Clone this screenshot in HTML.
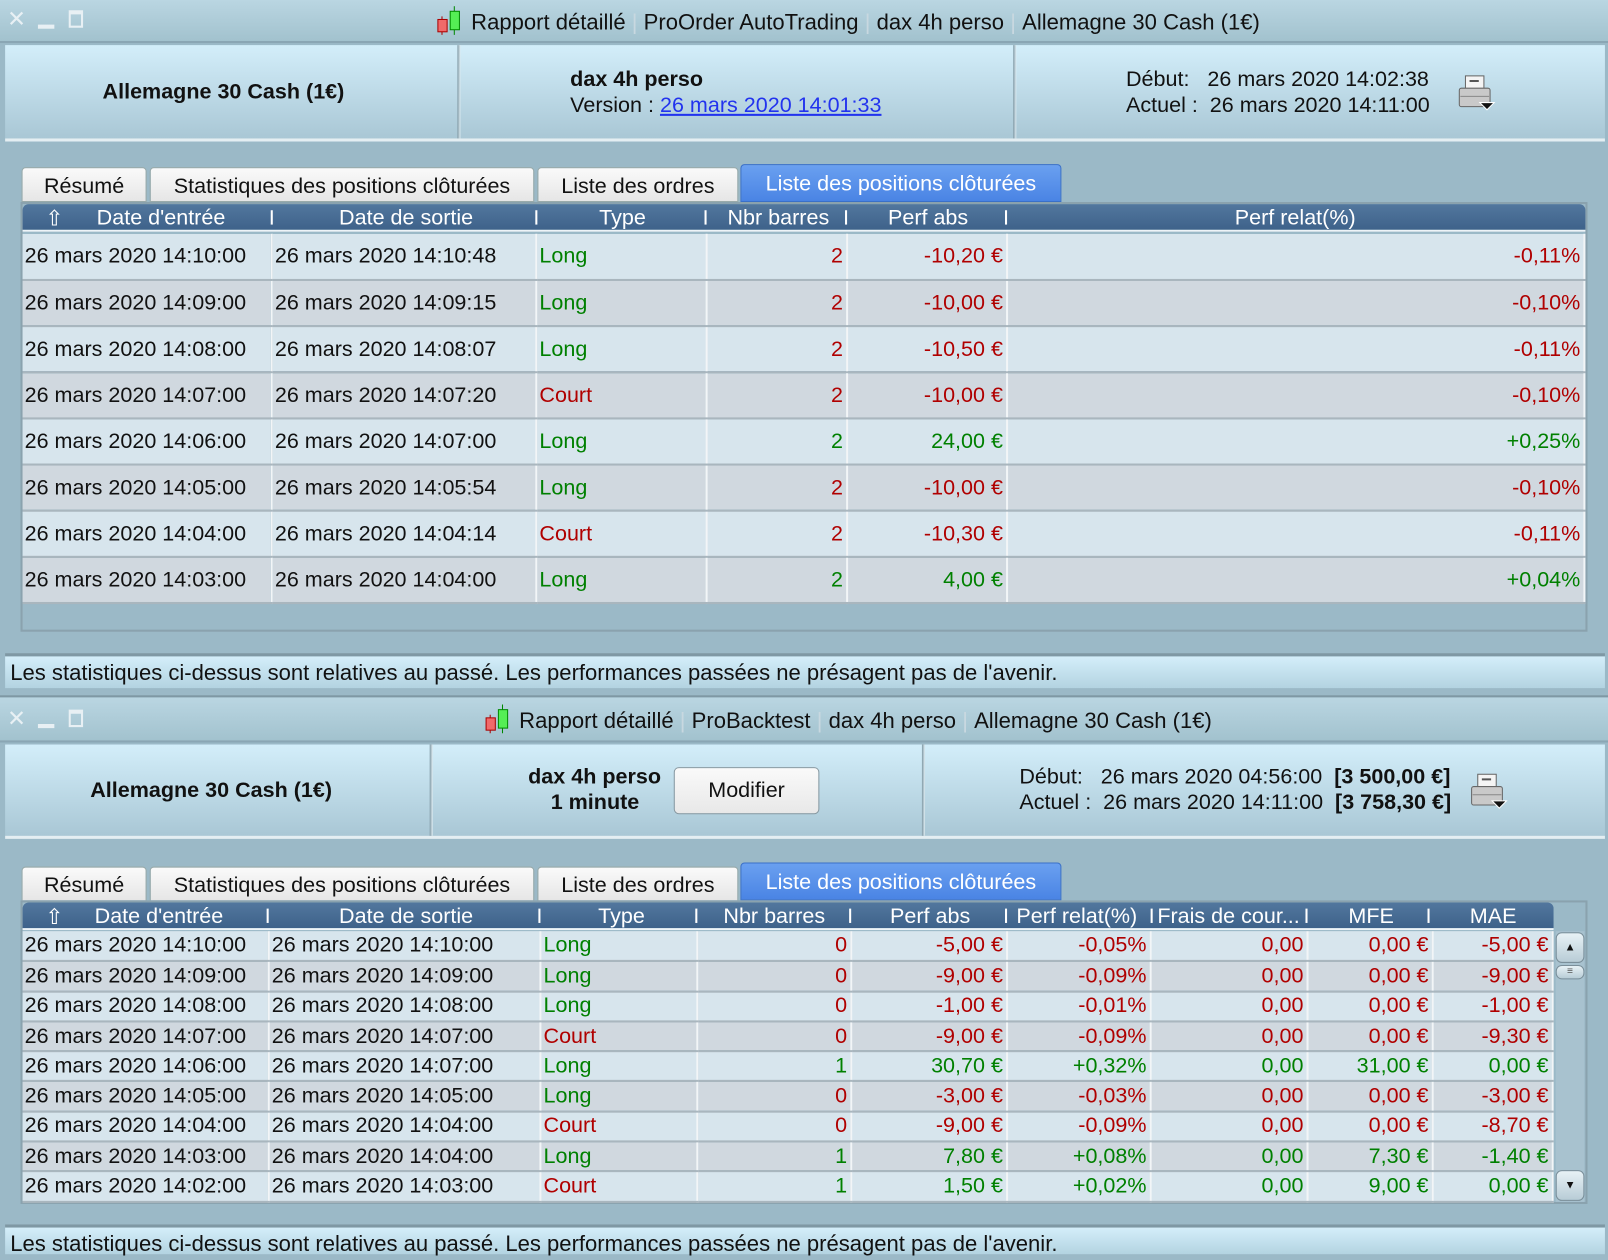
<!DOCTYPE html>
<html><head><meta charset="utf-8">
<style>
*{margin:0;padding:0;box-sizing:border-box}
html,body{width:1608px;height:1254px;overflow:hidden;background:#9bb9c7}
#w{position:absolute;left:0;top:0;width:1568px;height:1223px;transform:scale(1.02551);transform-origin:0 0;font-family:"Liberation Sans",sans-serif;font-size:21px;color:#111;background:#9bb9c7}
.abs{position:absolute}
.tb{position:absolute;left:0;width:1568px;background:linear-gradient(#bad6e2,#a2c2ce);border-bottom:2px solid #8aa6b4}
.ttl{position:absolute;left:0;width:100%;padding-left:86px;text-align:center;white-space:nowrap;font-size:21.5px}
.ttl .sep{color:#c8d8e0;margin:0 6px}
.info{position:absolute;left:5px;width:1560px;background:linear-gradient(#d3eefa,#a9c7d5);border-bottom:3px solid #e4eef2}
.vs{position:absolute;top:0;bottom:0;width:3px;background:linear-gradient(90deg,#7f98a4,#dfeef4)}
.tab{position:absolute;height:34px;background:linear-gradient(#fafafa,#e6e6e6);border:1px solid #9aa;border-radius:4px 4px 0 0;text-align:center;line-height:35px}
.tab.sel{background:linear-gradient(#6aa0f0,#4a84e4);color:#fff;border-color:#3a70c8;height:37px;line-height:38px}
.frame{position:absolute;border:2px solid #8aa2ae;background:#9bb9c7}
.hdr{position:absolute;height:27px;background:linear-gradient(#52779e,#3e628a);border-radius:6px 6px 0 0;color:#fff;border-bottom:2px solid #eef4f8}
.hdr span{position:absolute;top:2px;transform:translateX(-50%);white-space:nowrap}
.hdr i{position:absolute;top:6px;width:2px;height:14px;background:#fff}
table{position:absolute;border-collapse:collapse;table-layout:fixed}
td{white-space:nowrap;overflow:hidden;border-right:2px solid #f2f5f7;border-bottom:2px solid #a9b6be;padding:0 3px;text-align:right}
tr:nth-child(odd) td{background:#d7e5ed}
tr:nth-child(even) td{background:#d0d8df}
td.l{text-align:left;padding-left:2px}
.r{color:#b00000}.g{color:#008000}
.foot{position:absolute;left:5px;width:1560px;background:linear-gradient(#d4eefa,#b3d3e1);border-top:3px solid #7f98a4;padding-left:5px;font-size:21.5px}
.ctrl{position:absolute;color:#e8f0f4;font-size:22px}
</style></head><body><div id="w">

<!-- TOP WINDOW -->
<div class="tb" style="top:0;height:42px">
  <div class="ctrl" style="left:7px;top:6px">✕</div>
  <div class="abs" style="left:37px;top:24px;width:16px;height:4px;background:#e8f0f4"></div>
  <div class="abs" style="left:67px;top:10px;width:14px;height:17px;border:2px solid #e8f0f4;border-top-width:4px"></div>
  <div class="ttl" style="top:6px">
    <svg width="34" height="30" style="vertical-align:-7px" viewBox="0 0 34 30"><line x1="6" y1="10" x2="6" y2="28" stroke="#a00"/><rect x="2" y="13" width="9" height="12" fill="#f06a6a" stroke="#a00"/><line x1="18" y1="0" x2="18" y2="28" stroke="#080"/><rect x="14" y="5" width="9" height="18" fill="#5e5" stroke="#080"/></svg>Rapport détaillé<span class="sep">|</span>ProOrder AutoTrading<span class="sep">|</span>dax 4h perso<span class="sep">|</span>Allemagne 30 Cash (1€)
  </div>
</div>
<div class="info" style="top:44px;height:94px">
  <div class="abs" style="left:95px;top:34px;font-weight:bold">Allemagne 30 Cash (1€)</div>
  <div class="vs" style="left:441px"></div>
  <div class="abs" style="left:551px;top:22px;font-weight:bold">dax 4h perso</div>
  <div class="abs" style="left:551px;top:47px">Version : <span style="color:#2233ee;text-decoration:underline">26 mars 2020 14:01:33</span></div>
  <div class="vs" style="left:983px"></div>
  <div class="abs" style="left:1093px;top:22px">Début:&nbsp;&nbsp; 26 mars 2020 14:02:38</div>
  <div class="abs" style="left:1093px;top:47px">Actuel :&nbsp; 26 mars 2020 14:11:00</div>
  <svg class="abs" style="left:1415px;top:28px" width="40" height="38" viewBox="0 0 40 38"><rect x="9" y="2" width="18" height="14" fill="#f4f4f4" stroke="#666"/><line x1="13" y1="7" x2="22" y2="7" stroke="#555" stroke-width="2"/><rect x="3" y="14" width="30" height="18" rx="2" fill="#c9c9c9" stroke="#666"/><line x1="4" y1="22" x2="32" y2="22" stroke="#888"/><path d="M23 28h14l-7 7z" fill="#111" stroke="#fff"/></svg>
</div>

<div class="tab" style="left:21px;top:163px;width:122px">Résumé</div>
<div class="tab" style="left:146px;top:163px;width:375px">Statistiques des positions clôturées</div>
<div class="tab" style="left:524px;top:163px;width:196px">Liste des ordres</div>
<div class="tab sel" style="left:722px;top:160px;width:313px">Liste des positions clôturées</div>

<div class="frame" style="left:20px;top:197px;width:1528px;height:419px"></div>
<div class="hdr" style="left:22px;top:199px;width:1524px">
  <span style="left:31px">⇧</span><span style="left:135px">Date d'entrée</span><i style="left:242px"></i>
  <span style="left:374px">Date de sortie</span><i style="left:500px"></i>
  <span style="left:585px">Type</span><i style="left:665px"></i>
  <span style="left:737px">Nbr barres</span><i style="left:802px"></i>
  <span style="left:883px">Perf abs</span><i style="left:958px"></i>
  <span style="left:1241px">Perf relat(%)</span>
</div>
<table style="left:22px;top:228px;width:1524px">
<colgroup><col style="width:243px"><col style="width:258px"><col style="width:166px"><col style="width:137px"><col style="width:156px"><col></colgroup>
<tr style="height:45px"><td class="l">26 mars 2020 14:10:00</td><td class="l">26 mars 2020 14:10:48</td><td class="l g">Long</td><td class="r">2</td><td class="r">-10,20 €</td><td class="r">-0,11%</td></tr>
<tr style="height:45px"><td class="l">26 mars 2020 14:09:00</td><td class="l">26 mars 2020 14:09:15</td><td class="l g">Long</td><td class="r">2</td><td class="r">-10,00 €</td><td class="r">-0,10%</td></tr>
<tr style="height:45px"><td class="l">26 mars 2020 14:08:00</td><td class="l">26 mars 2020 14:08:07</td><td class="l g">Long</td><td class="r">2</td><td class="r">-10,50 €</td><td class="r">-0,11%</td></tr>
<tr style="height:45px"><td class="l">26 mars 2020 14:07:00</td><td class="l">26 mars 2020 14:07:20</td><td class="l r">Court</td><td class="r">2</td><td class="r">-10,00 €</td><td class="r">-0,10%</td></tr>
<tr style="height:45px"><td class="l">26 mars 2020 14:06:00</td><td class="l">26 mars 2020 14:07:00</td><td class="l g">Long</td><td class="g">2</td><td class="g">24,00 €</td><td class="g">+0,25%</td></tr>
<tr style="height:45px"><td class="l">26 mars 2020 14:05:00</td><td class="l">26 mars 2020 14:05:54</td><td class="l g">Long</td><td class="r">2</td><td class="r">-10,00 €</td><td class="r">-0,10%</td></tr>
<tr style="height:45px"><td class="l">26 mars 2020 14:04:00</td><td class="l">26 mars 2020 14:04:14</td><td class="l r">Court</td><td class="r">2</td><td class="r">-10,30 €</td><td class="r">-0,11%</td></tr>
<tr style="height:45px"><td class="l">26 mars 2020 14:03:00</td><td class="l">26 mars 2020 14:04:00</td><td class="l g">Long</td><td class="g">2</td><td class="g">4,00 €</td><td class="g">+0,04%</td></tr>
</table>

<div class="foot" style="top:637px;height:34px;line-height:32px">Les statistiques ci-dessus sont relatives au passé. Les performances passées ne présagent pas de l'avenir.</div>

<!-- BOTTOM WINDOW -->
<div class="tb" style="top:678px;height:46px;border-top:2px solid #7f98a4">
  <div class="ctrl" style="left:7px;top:8px">✕</div>
  <div class="abs" style="left:37px;top:26px;width:16px;height:4px;background:#e8f0f4"></div>
  <div class="abs" style="left:67px;top:12px;width:14px;height:17px;border:2px solid #e8f0f4;border-top-width:4px"></div>
  <div class="ttl" style="top:7px">
    <svg width="34" height="30" style="vertical-align:-7px" viewBox="0 0 34 30"><line x1="6" y1="10" x2="6" y2="28" stroke="#a00"/><rect x="2" y="13" width="9" height="12" fill="#f06a6a" stroke="#a00"/><line x1="18" y1="0" x2="18" y2="28" stroke="#080"/><rect x="14" y="5" width="9" height="18" fill="#5e5" stroke="#080"/></svg>Rapport détaillé<span class="sep">|</span>ProBacktest<span class="sep">|</span>dax 4h perso<span class="sep">|</span>Allemagne 30 Cash (1€)
  </div>
</div>
<div class="info" style="top:726px;height:92px">
  <div class="abs" style="left:83px;top:33px;font-weight:bold">Allemagne 30 Cash (1€)</div>
  <div class="vs" style="left:414px"></div>
  <div class="abs" style="left:510px;top:20px;font-weight:bold">dax 4h perso</div>
  <div class="abs" style="left:532px;top:45px;font-weight:bold">1 minute</div>
  <div class="abs" style="left:652px;top:22px;width:142px;height:46px;border:1px solid #8a9aa2;border-radius:5px;background:linear-gradient(#fafafa,#e8e8e8);text-align:center;line-height:44px">Modifier</div>
  <div class="vs" style="left:894px"></div>
  <div class="abs" style="left:989px;top:20px">Début:&nbsp;&nbsp; 26 mars 2020 04:56:00 &nbsp;<b>[3 500,00 €]</b></div>
  <div class="abs" style="left:989px;top:45px">Actuel :&nbsp; 26 mars 2020 14:11:00 &nbsp;<b>[3 758,30 €]</b></div>
  <svg class="abs" style="left:1427px;top:27px" width="40" height="38" viewBox="0 0 40 38"><rect x="9" y="2" width="18" height="14" fill="#f4f4f4" stroke="#666"/><line x1="13" y1="7" x2="22" y2="7" stroke="#555" stroke-width="2"/><rect x="3" y="14" width="30" height="18" rx="2" fill="#c9c9c9" stroke="#666"/><line x1="4" y1="22" x2="32" y2="22" stroke="#888"/><path d="M23 28h14l-7 7z" fill="#111" stroke="#fff"/></svg>
</div>

<div class="tab" style="left:21px;top:845px;width:122px">Résumé</div>
<div class="tab" style="left:146px;top:845px;width:375px">Statistiques des positions clôturées</div>
<div class="tab" style="left:524px;top:845px;width:196px">Liste des ordres</div>
<div class="tab sel" style="left:722px;top:841px;width:313px">Liste des positions clôturées</div>

<div class="frame" style="left:20px;top:878px;width:1528px;height:296px"></div>
<div class="hdr" style="left:22px;top:880px;width:1493px">
  <span style="left:31px">⇧</span><span style="left:133px">Date d'entrée</span><i style="left:238px"></i>
  <span style="left:374px">Date de sortie</span><i style="left:503px"></i>
  <span style="left:584px">Type</span><i style="left:656px"></i>
  <span style="left:733px">Nbr barres</span><i style="left:806px"></i>
  <span style="left:885px">Perf abs</span><i style="left:958px"></i>
  <span style="left:1028px">Perf relat(%)</span><i style="left:1100px"></i>
  <span style="left:1176px">Frais de cour...</span><i style="left:1251px"></i>
  <span style="left:1315px">MFE</span><i style="left:1370px"></i>
  <span style="left:1434px">MAE</span>
</div>
<table style="left:22px;top:908px;width:1493px;line-height:26px">
<colgroup><col style="width:240px"><col style="width:265px"><col style="width:153px"><col style="width:150px"><col style="width:152px"><col style="width:140px"><col style="width:153px"><col style="width:122px"><col></colgroup>
<tr style="height:29.3px"><td class="l">26 mars 2020 14:10:00</td><td class="l">26 mars 2020 14:10:00</td><td class="l g">Long</td><td class="r">0</td><td class="r">-5,00 €</td><td class="r">-0,05%</td><td class="r">0,00</td><td class="r">0,00 €</td><td class="r">-5,00 €</td></tr>
<tr style="height:29.3px"><td class="l">26 mars 2020 14:09:00</td><td class="l">26 mars 2020 14:09:00</td><td class="l g">Long</td><td class="r">0</td><td class="r">-9,00 €</td><td class="r">-0,09%</td><td class="r">0,00</td><td class="r">0,00 €</td><td class="r">-9,00 €</td></tr>
<tr style="height:29.3px"><td class="l">26 mars 2020 14:08:00</td><td class="l">26 mars 2020 14:08:00</td><td class="l g">Long</td><td class="r">0</td><td class="r">-1,00 €</td><td class="r">-0,01%</td><td class="r">0,00</td><td class="r">0,00 €</td><td class="r">-1,00 €</td></tr>
<tr style="height:29.3px"><td class="l">26 mars 2020 14:07:00</td><td class="l">26 mars 2020 14:07:00</td><td class="l r">Court</td><td class="r">0</td><td class="r">-9,00 €</td><td class="r">-0,09%</td><td class="r">0,00</td><td class="r">0,00 €</td><td class="r">-9,30 €</td></tr>
<tr style="height:29.3px"><td class="l">26 mars 2020 14:06:00</td><td class="l">26 mars 2020 14:07:00</td><td class="l g">Long</td><td class="g">1</td><td class="g">30,70 €</td><td class="g">+0,32%</td><td class="g">0,00</td><td class="g">31,00 €</td><td class="g">0,00 €</td></tr>
<tr style="height:29.3px"><td class="l">26 mars 2020 14:05:00</td><td class="l">26 mars 2020 14:05:00</td><td class="l g">Long</td><td class="r">0</td><td class="r">-3,00 €</td><td class="r">-0,03%</td><td class="r">0,00</td><td class="r">0,00 €</td><td class="r">-3,00 €</td></tr>
<tr style="height:29.3px"><td class="l">26 mars 2020 14:04:00</td><td class="l">26 mars 2020 14:04:00</td><td class="l r">Court</td><td class="r">0</td><td class="r">-9,00 €</td><td class="r">-0,09%</td><td class="r">0,00</td><td class="r">0,00 €</td><td class="r">-8,70 €</td></tr>
<tr style="height:29.3px"><td class="l">26 mars 2020 14:03:00</td><td class="l">26 mars 2020 14:04:00</td><td class="l g">Long</td><td class="g">1</td><td class="g">7,80 €</td><td class="g">+0,08%</td><td class="g">0,00</td><td class="g">7,30 €</td><td class="g">-1,40 €</td></tr>
<tr style="height:29.3px"><td class="l">26 mars 2020 14:02:00</td><td class="l">26 mars 2020 14:03:00</td><td class="l r">Court</td><td class="g">1</td><td class="g">1,50 €</td><td class="g">+0,02%</td><td class="g">0,00</td><td class="g">9,00 €</td><td class="g">0,00 €</td></tr>
</table>
<div class="abs" style="left:1517px;top:908px;width:28px;height:264px;background:#a8c2cf"></div>
<div class="abs" style="left:1517px;top:909px;width:28px;height:30px;border:1px solid #7a8f9a;border-radius:6px;background:linear-gradient(#e8f2f6,#b8ccd6);text-align:center;font-size:11px;line-height:28px">▲</div>
<div class="abs" style="left:1517px;top:941px;width:28px;height:14px;border:1px solid #7a8f9a;border-radius:6px;background:linear-gradient(#e8f2f6,#b8ccd6);text-align:center;font-size:10px;line-height:12px;color:#555">≡</div>
<div class="abs" style="left:1517px;top:1141px;width:28px;height:30px;border:1px solid #7a8f9a;border-radius:6px;background:linear-gradient(#e8f2f6,#b8ccd6);text-align:center;font-size:11px;line-height:28px">▼</div>

<div class="foot" style="top:1194px;height:29px;line-height:32px">Les statistiques ci-dessus sont relatives au passé. Les performances passées ne présagent pas de l'avenir.</div>
</div></body></html>
